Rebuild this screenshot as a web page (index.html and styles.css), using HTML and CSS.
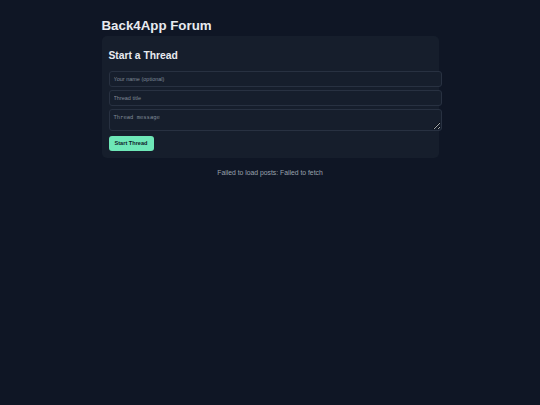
FILE: index.html
```
<!DOCTYPE html>
<html>
<head>
<meta charset="utf-8">
<link rel="stylesheet" href="styles.css">
</head>
<body>
<div class="wrap">
  <h1 class="title">Back4App Forum</h1>
  <div class="card">
    <h2 class="card-title">Start a Thread</h2>
    <form class="form">
      <input class="field" type="text" placeholder="Your name (optional)">
      <input class="field" type="text" placeholder="Thread title">
      <textarea class="field area" placeholder="Thread message"></textarea>
      <div class="actions"><button class="btn" type="button">Start Thread</button></div>
    </form>
  </div>
  <p class="error">Failed to load posts: Failed to fetch</p>
</div>
</body>
</html>
```
FILE: styles.css
```
html, body {
  margin: 0;
  padding: 0;
  background: #0f1625;
  font-family: "Liberation Sans", Arial, sans-serif;
  color: #e5e7eb;
}
.wrap {
  width: 337px;
  margin: 0 auto;
  padding-top: 17.5px;
}
.title {
  margin: 0 0 3.5px;
  font-size: 13.3px;
  line-height: 15px;
  font-weight: 700;
  color: #e8ebf0;
}
.card {
  background: #161e2c;
  border-radius: 5px;
  padding: 14.4px 7px 7px;
}
.card-title {
  margin: 0 0 8.6px;
  font-size: 10.3px;
  line-height: 12px;
  font-weight: 700;
  color: #e8ebf0;
}
.form {
  display: flex;
  flex-direction: column;
  gap: 3px;
  margin: 0;
}
.field {
  display: block;
  width: 100%;
  box-sizing: content-box;
  margin: 0;
  padding: 4px;
  border: 1px solid #283141;
  border-radius: 3px;
  background: #161e2c;
  color: #e5e7eb;
  font-family: "Liberation Sans", Arial, sans-serif;
  font-size: 5.5px;
  line-height: 6px;
  height: 6px;
  outline: none;
}
.field::placeholder {
  color: #7f8896;
}
.area {
  font-family: "DejaVu Sans Mono", "Liberation Mono", monospace;
  height: 12px;
  resize: vertical;
}
.actions {
  margin-top: 2px;
  display: flex;
}
.btn {
  background: #6ee7b7;
  color: #0f172a;
  border: none;
  border-radius: 3px;
  font-family: "Liberation Sans", Arial, sans-serif;
  font-size: 5.6px;
  line-height: 7px;
  font-weight: 700;
  padding: 4px 5px;
  width: 45px;
  height: 15px;
  cursor: pointer;
}
.error {
  margin: 11.5px 0 0;
  text-align: center;
  font-size: 6.8px;
  line-height: 8px;
  color: #9aa2ae;
}
```
